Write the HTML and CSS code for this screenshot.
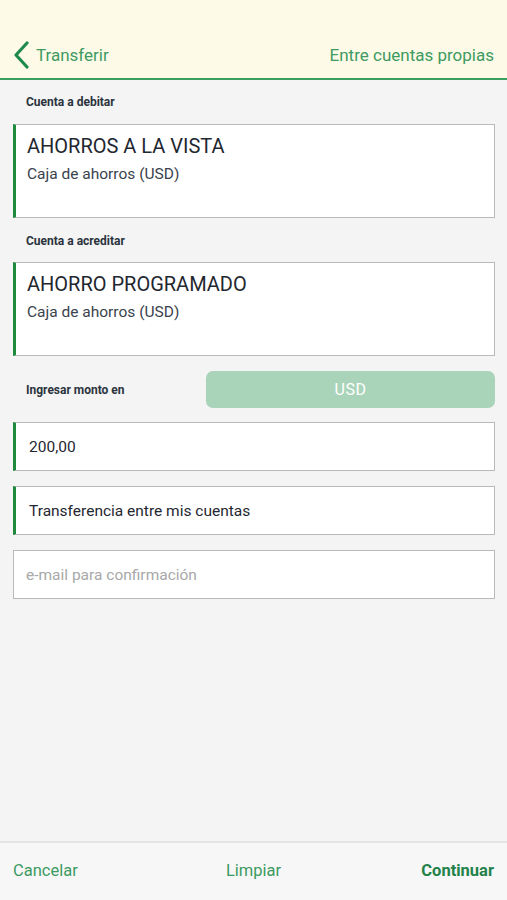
FILE: index.html
```html
<!DOCTYPE html>
<html lang="es">
<head>
  <meta charset="UTF-8" />
  <meta name="viewport" content="width=device-width, initial-scale=1.0" />
  <title>Transferir</title>
  <link rel="stylesheet" href="styles.css">
</head>
<body>
  <header class="topbar">
    <a class="back" href="#">
      <svg width="18" height="28" viewBox="0 0 18 28"><path d="M15 2 L4 14 L15 26" fill="none" stroke="#1f8a4c" stroke-width="3.2" stroke-linecap="round" stroke-linejoin="round"/></svg>
      <span>Transferir</span>
    </a>
    <span class="subtitle">Entre cuentas propias</span>
  </header>

  <main class="form">
    <div class="label">Cuenta a debitar</div>
    <div class="card">
      <div class="card-title">AHORROS A LA VISTA</div>
      <div class="card-sub">Caja de ahorros (USD)</div>
    </div>

    <div class="label second">Cuenta a acreditar</div>
    <div class="card">
      <div class="card-title">AHORRO PROGRAMADO</div>
      <div class="card-sub">Caja de ahorros (USD)</div>
    </div>

    <div class="monto-row">
      <span class="label inline">Ingresar monto en</span>
      <button class="currency">USD</button>
    </div>

    <div class="field filled">200,00</div>
    <div class="field filled">Transferencia entre mis cuentas</div>
    <div class="field placeholder">e-mail para confirmación</div>
  </main>

  <footer class="actions">
    <a href="#" class="action">Cancelar</a>
    <a href="#" class="action">Limpiar</a>
    <a href="#" class="action strong">Continuar</a>
  </footer>
</body>
</html>
```

FILE: styles.css
```css
body {
  margin: 0;
  height: 900px;
  display: flex;
  flex-direction: column;
  font-family: 'Roboto', 'Liberation Sans', sans-serif;
  background-color: #f4f4f4;
  color: #2b333d;
}
a {
  text-decoration: none;
}
.topbar {
  height: 80px;
  box-sizing: border-box;
  background-color: #fdfbe7;
  border-bottom: 2px solid #3a9f5c;
  display: flex;
  align-items: flex-end;
  justify-content: space-between;
  padding: 0 13px 9px 12px;
}
.back {
  display: flex;
  align-items: center;
  gap: 6px;
  color: #3d9a62;
  font-size: 17px;
}
.subtitle {
  color: #3d9a62;
  font-size: 17px;
  line-height: 28px;
}
.form {
  flex: 1;
  padding: 14px 12px 0 13px;
  display: flex;
  flex-direction: column;
}
.label {
  font-size: 12px;
  font-weight: bold;
  line-height: 16px;
  color: #2b333d;
  padding-left: 13px;
  margin-bottom: 14px;
}
.label.second {
  margin-top: 15px;
  margin-bottom: 13px;
}
.card {
  height: 94px;
  box-sizing: border-box;
  background-color: #ffffff;
  border: 1px solid #b9b9b9;
  border-left: 3px solid #1e8a3e;
  padding: 8px 11px;
}
.card-title {
  font-size: 20px;
  line-height: 26px;
  color: #1f2730;
}
.card-sub {
  font-size: 15.5px;
  line-height: 22px;
  margin-top: 4px;
  color: #3a434d;
}
.monto-row {
  display: flex;
  align-items: center;
  margin-top: 15px;
  margin-bottom: 14px;
}
.label.inline {
  margin: 0;
  width: 180px;
}
.currency {
  flex: 1;
  height: 37px;
  border: none;
  border-radius: 7px;
  background-color: #a9d4b9;
  color: #ffffff;
  font-family: 'Roboto', 'Liberation Sans', sans-serif;
  font-size: 16px;
  letter-spacing: 0.5px;
}
.field {
  height: 49px;
  box-sizing: border-box;
  background-color: #ffffff;
  border: 1px solid #b9b9b9;
  display: flex;
  align-items: center;
  padding: 0 13px;
  font-size: 15.5px;
  margin-bottom: 15px;
}
.field.filled {
  border-left: 3px solid #1e8a3e;
  color: #1f2730;
}
.field.placeholder {
  color: #a8a8a8;
  padding-left: 12px;
  margin-bottom: 0;
}
.actions {
  height: 59px;
  box-sizing: border-box;
  border-top: 2px solid #e4e4e4;
  background-color: #f7f7f7;
  display: flex;
  align-items: center;
  justify-content: space-between;
  padding: 0 13px 2px 13px;
}
.action {
  color: #3d9a62;
  font-size: 16.5px;
  flex: 1;
}
.action:nth-child(2) {
  text-align: center;
}
.action.strong {
  text-align: right;
  font-weight: bold;
  color: #22824a;
}
```
